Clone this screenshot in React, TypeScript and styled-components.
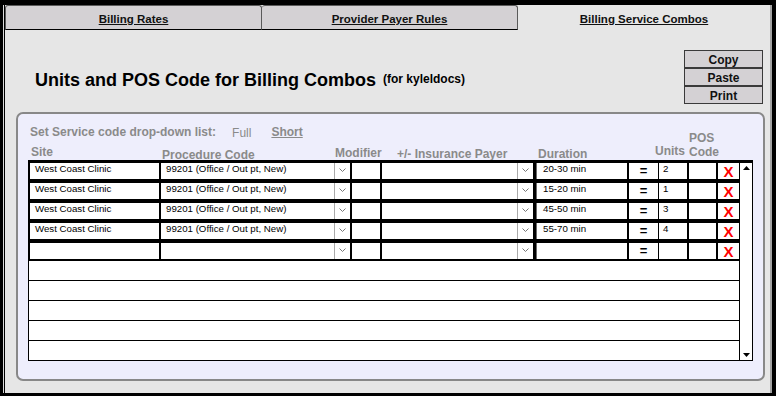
import React from "react";
import styled, { createGlobalStyle } from "styled-components";

const GlobalStyle = createGlobalStyle`
  html, body {
    margin: 0;
    padding: 0;
    background: #000;
  }
  body {
    font-family: "Liberation Sans", Arial, sans-serif;
  }
`;

const Frame = styled.div`
  width: 776px;
  height: 396px;
  box-sizing: border-box;
  padding: 5px 4px 3px 5px;
  background: #000;
`;

const Window = styled.div`
  height: 100%;
  box-sizing: border-box;
  background: #e6e6e6;
  border-right: 2px solid #a3a3a3;
  box-shadow: -1px 0 0 #000, -2px 0 0 #dcdcdc;
  display: flex;
  flex-direction: column;
`;

const TabBar = styled.div`
  display: flex;
  height: 25px;
`;

const Tab = styled.div<{ $active?: boolean; $w?: number; $first?: boolean }>`
  box-sizing: border-box;
  width: ${(p) => (p.$w ? `${p.$w}px` : "auto")};
  flex: ${(p) => (p.$w ? "0 0 auto" : "1")};
  display: flex;
  align-items: center;
  justify-content: center;
  padding-top: 3px;
  background: ${(p) => (p.$active ? "#e6e6e6" : "#d4d1d4")};
  border-top: 1px solid ${(p) => (p.$active ? "#e6e6e6" : "#5a5a5a")};
  border-left: ${(p) => (p.$first ? "1px solid #5a5a5a" : "none")};
  border-right: ${(p) => (p.$active ? "none" : "1px solid #5a5a5a")};
  border-bottom: 1px solid ${(p) => (p.$active ? "transparent" : "#000")};
  border-radius: 3px 3px 0 0;
  font-size: 11.5px;
  font-weight: bold;
  color: #111;
  text-decoration: underline;
`;

const TitleBar = styled.div`
  display: flex;
  align-items: center;
  justify-content: space-between;
  padding: 20px 7px 0 30px;
  margin-bottom: 8px;
`;

const Title = styled.h1`
  margin: 0;
  padding-top: 4px;
  font-size: 18px;
  line-height: 22px;
  font-weight: bold;
  color: #000;
`;

const TitleNote = styled.span`
  margin-left: 7px;
  font-size: 12px;
  vertical-align: 3px;
`;

const ButtonStack = styled.div`
  display: flex;
  flex-direction: column;
  width: 79px;
`;

const ActionButton = styled.button`
  height: 18px;
  box-sizing: border-box;
  padding: 1px 0 0;
  border: 1px solid #3a3a3a;
  background: #d4d1d4;
  color: #111;
  font: bold 12px "Liberation Sans", Arial, sans-serif;
`;

const Panel = styled.div`
  flex: 1;
  margin: 0 5px 12px 11px;
  padding: 11px 10px 18px;
  border: 2px solid #888;
  border-radius: 7px;
  background: #eeeefc;
  display: flex;
  flex-direction: column;
`;

const ListSetting = styled.div`
  display: flex;
  height: 14px;
  padding-left: 2px;
  font-size: 12px;
  line-height: 14px;
  color: #8a8a8a;
  font-weight: bold;
`;

const ListOption = styled.span<{ $selected?: boolean; $gap: number }>`
  margin-left: ${(p) => p.$gap}px;
  font-weight: ${(p) => (p.$selected ? "bold" : "normal")};
  text-decoration: ${(p) => (p.$selected ? "underline" : "none")};
  position: relative;
  top: ${(p) => (p.$selected ? 0 : 1)}px;
`;

const HeaderRow = styled.div`
  display: flex;
  align-items: flex-end;
  height: 21px;
`;

const ColLabel = styled.div<{ $w: number; $drop: number; $pl?: number }>`
  flex-shrink: 0;
  box-sizing: border-box;
  width: ${(p) => p.$w}px;
  margin-bottom: ${(p) => p.$drop}px;
  padding-left: ${(p) => p.$pl ?? 0}px;
  font-size: 12px;
  line-height: 14px;
  font-weight: bold;
  color: #8a8a8a;
  white-space: pre-line;
`;

const Grid = styled.div`
  display: flex;
  height: 201px;
`;

const RowsCol = styled.div`
  flex: 1;
  display: flex;
  flex-direction: column;
  border-left: 1px solid #000;
`;

const EntryRow = styled.div<{ $last?: boolean }>`
  display: flex;
  background: #000;
  padding: 3px 0 ${(p) => (p.$last ? 2 : 1)}px;
`;

const Field = styled.div<{ $w: number; $ml: number; $pl?: number }>`
  flex-shrink: 0;
  box-sizing: border-box;
  width: ${(p) => p.$w}px;
  height: 16px;
  margin-left: ${(p) => p.$ml}px;
  padding-left: ${(p) => p.$pl ?? 0}px;
  background: #fff;
  color: #000;
  font-size: 9.7px;
  line-height: 12px;
  white-space: nowrap;
  overflow: hidden;
`;

const DropButton = styled(Field)`
  display: flex;
  justify-content: center;
  padding-top: 5px;
  border-left: 1px solid #a9a9a9;
`;

const DurationField = styled(Field)`
  border-left: 1px solid #6a6a6a;
`;

const EqualsField = styled(Field)`
  display: flex;
  align-items: center;
  justify-content: center;
  font-size: 13px;
  font-weight: bold;
`;

const RemoveField = styled(Field)`
  text-align: center;
  padding-top: 1px;
  color: #f00;
  font-size: 15px;
  line-height: 15px;
  font-weight: bold;
`;

const BlankRow = styled.div`
  height: 20px;
  box-sizing: border-box;
  border-bottom: 1px solid #000;
  background: #fff;
`;

const Scrollbar = styled.div`
  width: 14px;
  box-sizing: border-box;
  border: 1px solid #000;
  border-top-width: 3px;
  background: #fff;
  display: flex;
  flex-direction: column;
  justify-content: space-between;
`;

const ScrollArrow = styled.div`
  height: 10px;
  display: flex;
  align-items: center;
  justify-content: center;
`;

const rows = [
  { site: "West Coast Clinic", code: "99201 (Office / Out pt, New)", duration: "20-30 min", units: "2" },
  { site: "West Coast Clinic", code: "99201 (Office / Out pt, New)", duration: "15-20 min", units: "1" },
  { site: "West Coast Clinic", code: "99201 (Office / Out pt, New)", duration: "45-50 min", units: "3" },
  { site: "West Coast Clinic", code: "99201 (Office / Out pt, New)", duration: "55-70 min", units: "4" },
  { site: "", code: "", duration: "", units: "" }
];

// label widths line up with the grid columns below
const columns = [
  { label: "Site", w: 134, drop: 1, pl: 3 },
  { label: "Procedure Code", w: 173, drop: -2 },
  { label: "Modifier", w: 62, drop: 0 },
  { label: "+/- Insurance Payer", w: 141, drop: -1 },
  { label: "Duration", w: 117, drop: -1 },
  { label: "Units", w: 34, drop: 2 },
  { label: "POS\nCode", w: 50, drop: 1 }
];

function Chevron() {
  return (
    <svg width="7" height="4" viewBox="0 0 7 4">
      <polyline points="0.5,0.5 3.5,3.5 6.5,0.5" fill="none" stroke="#777" strokeWidth="1" />
    </svg>
  );
}

function Arrow({ up }: { up?: boolean }) {
  return (
    <svg width="7" height="4" viewBox="0 0 7 4">
      <polygon points={up ? "0,4 3.5,0 7,4" : "0,0 3.5,4 7,0"} fill="#000" />
    </svg>
  );
}

function App() {
  return (
    <Frame>
      <GlobalStyle />
      <Window>
        <TabBar>
          <Tab $w={257} $first>Billing Rates</Tab>
          <Tab $w={256}>Provider Payer Rules</Tab>
          <Tab $active>Billing Service Combos</Tab>
        </TabBar>

        <TitleBar>
          <Title>
            Units and POS Code for Billing Combos
            <TitleNote>(for kyleldocs)</TitleNote>
          </Title>
          <ButtonStack>
            <ActionButton>Copy</ActionButton>
            <ActionButton>Paste</ActionButton>
            <ActionButton>Print</ActionButton>
          </ButtonStack>
        </TitleBar>

        <Panel>
          <ListSetting>
            Set Service code drop-down list:
            <ListOption $gap={16}>Full</ListOption>
            <ListOption $gap={20} $selected>Short</ListOption>
          </ListSetting>

          <HeaderRow>
            {columns.map((c) => (
              <ColLabel key={c.label} $w={c.w} $drop={c.drop} $pl={c.pl}>
                {c.label}
              </ColLabel>
            ))}
          </HeaderRow>

          <Grid>
            <RowsCol>
              {rows.map((r, i) => (
                <EntryRow key={i} $last={i === rows.length - 1}>
                  <Field $w={129} $ml={1} $pl={5}>{r.site}</Field>
                  <Field $w={173} $ml={2} $pl={5}>{r.code}</Field>
                  <DropButton $w={16} $ml={0}><Chevron /></DropButton>
                  <Field $w={28} $ml={2} />
                  <Field $w={135} $ml={2} />
                  <DropButton $w={16} $ml={0}><Chevron /></DropButton>
                  <DurationField $w={91} $ml={3} $pl={6}>{r.duration}</DurationField>
                  <EqualsField $w={29} $ml={2}>=</EqualsField>
                  <Field $w={28} $ml={1} $pl={4}>{r.units}</Field>
                  <Field $w={27} $ml={2} />
                  <RemoveField $w={21} $ml={2}>X</RemoveField>
                </EntryRow>
              ))}
              {[0, 1, 2, 3, 4].map((n) => (
                <BlankRow key={n} />
              ))}
            </RowsCol>
            <Scrollbar>
              <ScrollArrow><Arrow up /></ScrollArrow>
              <ScrollArrow><Arrow /></ScrollArrow>
            </Scrollbar>
          </Grid>
        </Panel>
      </Window>
    </Frame>
  );
}

export default App;
